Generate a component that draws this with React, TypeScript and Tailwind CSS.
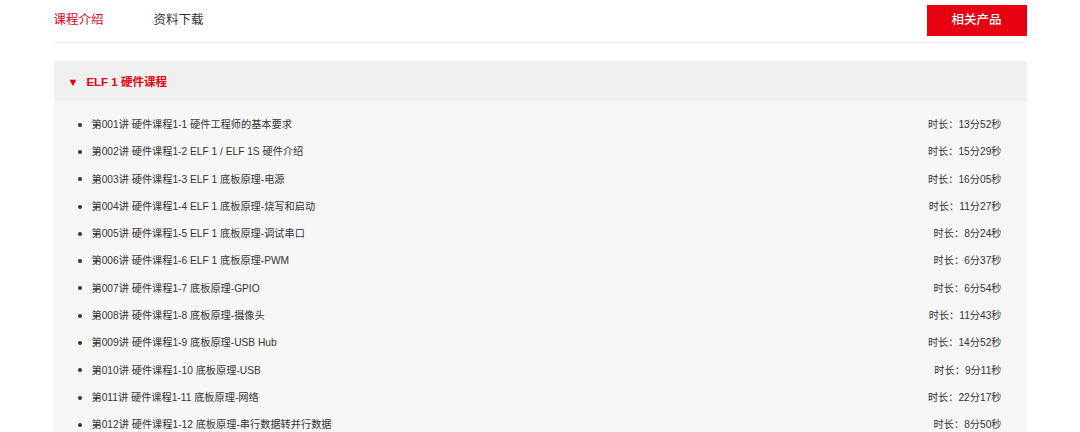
const FONT = { fontFamily: '"Liberation Sans", "Noto Sans CJK SC", sans-serif' };

const lessons: [string, string][] = [
  ["第001讲 硬件课程1-1 硬件工程师的基本要求", "13分52秒"],
  ["第002讲 硬件课程1-2 ELF 1 / ELF 1S 硬件介绍", "15分29秒"],
  ["第003讲 硬件课程1-3 ELF 1 底板原理-电源", "16分05秒"],
  ["第004讲 硬件课程1-4 ELF 1 底板原理-烧写和启动", "11分27秒"],
  ["第005讲 硬件课程1-5 ELF 1 底板原理-调试串口", "8分24秒"],
  ["第006讲 硬件课程1-6 ELF 1 底板原理-PWM", "6分37秒"],
  ["第007讲 硬件课程1-7 底板原理-GPIO", "6分54秒"],
  ["第008讲 硬件课程1-8 底板原理-摄像头", "11分43秒"],
  ["第009讲 硬件课程1-9 底板原理-USB Hub", "14分52秒"],
  ["第010讲 硬件课程1-10 底板原理-USB", "9分11秒"],
  ["第011讲 硬件课程1-11 底板原理-网络", "22分17秒"],
  ["第012讲 硬件课程1-12 底板原理-串行数据转并行数据", "8分50秒"],
];

export default function App() {
  return (
    <div className="h-[432px] w-[1080px] overflow-hidden bg-white" style={FONT}>
      <div className="mx-auto w-[973px]">
        {/* tabs */}
        <div className="flex h-[43px] items-start border-b border-[#eeeeee] pt-[5px]">
          <div className="flex h-[31px] flex-1 items-center gap-[50px] text-[12.5px]">
            <span className="text-[#e60012]">课程介绍</span>
            <span className="text-[#333333]">资料下载</span>
          </div>
          <button className="h-[31px] w-[100px] bg-[#e60012] text-[12.5px] font-medium text-white">
            相关产品
          </button>
        </div>

        {/* section */}
        <div className="mt-[18px]">
          <div className="flex h-[40px] items-center bg-[#f0f0f0] pt-[3px] pl-[14px] text-[11.5px] font-bold text-[#e60012]">
            <span className="mr-[8px] text-[11px]">▼</span>
            ELF 1 硬件课程
          </div>
          <ul className="bg-[#f7f7f7] pt-[10px] pb-4">
            {lessons.map(([title, dur]) => (
              <li
                key={title}
                className="flex h-[27.3px] items-center pr-[25px] pl-[24px] text-[10.2px] text-[#333333]"
              >
                <span className="mr-[10px] h-[4px] w-[4px] rounded-full bg-[#333333]" />
                <span className="flex-1">{title}</span>
                <span>时长：{dur}</span>
              </li>
            ))}
          </ul>
        </div>
      </div>
    </div>
  );
}
